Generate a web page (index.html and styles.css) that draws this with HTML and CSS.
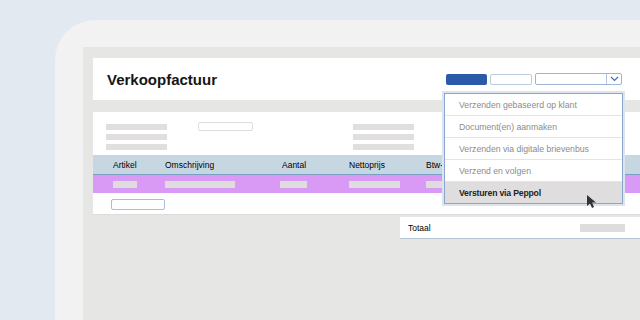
FILE: index.html
```html
<!DOCTYPE html>
<html>
	<head>
		<title>Verkoopfactuur</title>
		<link rel="stylesheet" href="styles.css">
	</head>
	<body>
		<div class="device">
			<div class="screen">
				<div class="topbar">
					<h1 class="title">Verkoopfactuur</h1>
					<div class="actions">
						<span class="btn btn-primary"></span>
						<span class="btn btn-plain"></span>
						<span class="select">
							<span class="select-arrow">
								<svg width="9" height="6" viewBox="0 0 9 6"><path d="M1 1 L4.5 4.5 L8 1" fill="none" stroke="#3f6fb5" stroke-width="1.2"/></svg>
							</span>
						</span>
						<ul class="menu">
							<li>Verzenden gebaseerd op klant</li>
							<li>Document(en) aanmaken</li>
							<li>Verzenden via digitale brievenbus</li>
							<li>Verzend en volgen</li>
							<li class="active">Versturen via Peppol</li>
							<svg class="cursor" width="11" height="14" viewBox="0 0 11 14"><path d="M0 0 L0 11 L3 8.5 L5 13 L7 12 L5 7.5 L9 7.5 Z" fill="#333"/></svg>
						</ul>
					</div>
				</div>
				<div class="panel">
					<div class="fields">
						<div class="lines"><i></i><i></i><i></i></div>
						<span class="field"></span>
						<div class="lines lines-right"><i></i><i></i><i></i></div>
					</div>
					<div class="row row-head">
						<span>Artikel</span>
						<span>Omschrijving</span>
						<span>Aantal</span>
						<span>Nettoprijs</span>
						<span>Btw-tarief</span>
					</div>
					<div class="row row-item">
						<span><i class="ph" style="width: 24px"></i></span>
						<span><i class="ph" style="width: 70px"></i></span>
						<span><i class="ph ph-shift" style="width: 27px"></i></span>
						<span><i class="ph" style="width: 51px"></i></span>
						<span><i class="ph" style="width: 40px"></i></span>
					</div>
					<div class="row-add"><span class="field field-blue"></span></div>
				</div>
				<div class="totals">
					<span>Totaal</span>
					<i class="ph ph-total"></i>
				</div>
			</div>
		</div>
	</body>
</html>
```

FILE: styles.css
```css
html, body {
	margin: 0px;
	height: 320px;
	overflow: hidden;
}
body {
	background-color: #e2e9f0;
	font-family: "Liberation Sans", Arial, sans-serif;
	color: #111;
}
.device {
	margin: 20px 0px 0px 55px;
	padding: 27px 0px 0px 28px;
	height: 300px;
	box-sizing: border-box;
	background-color: #f2f2f2;
	border-top-left-radius: 40px;
}
.screen {
	padding: 11px 0px 0px 10px;
	height: 273px;
	box-sizing: border-box;
	background-color: #e6e6e4;
}
.topbar {
	height: 42px;
	background-color: white;
	display: flex;
	align-items: center;
	justify-content: space-between;
	padding: 0px 18px 0px 14px;
}
.title {
	margin: 0px;
	font-size: 15px;
	font-weight: bold;
	color: #151515;
}
.actions {
	position: relative;
	display: flex;
	align-items: center;
	gap: 3px;
}
.btn {
	display: block;
	height: 11px;
	border-radius: 2px;
	box-sizing: border-box;
}
.btn-primary {
	width: 41px;
	background-color: #2b5ba8;
}
.btn-plain {
	width: 42px;
	border: 1px solid #bccbe0;
	background-color: white;
}
.select {
	display: flex;
	justify-content: flex-end;
	width: 87px;
	height: 12px;
	box-sizing: border-box;
	border: 1px solid #9fb4d3;
	border-radius: 2px;
}
.select-arrow {
	width: 14px;
	border-left: 1px solid #b3c4dc;
	display: flex;
	align-items: center;
	justify-content: center;
}
.menu {
	position: absolute;
	left: -2px;
	top: 20px;
	width: 179px;
	box-sizing: border-box;
	margin: 0px;
	padding: 0px;
	list-style: none;
	background-color: white;
	border: 1px solid #8aa6cd;
	box-shadow: 0px 0px 0px 2px #dbe4ef;
	z-index: 2;
}
.menu li {
	height: 21px;
	line-height: 22px;
	padding-left: 14px;
	font-size: 8.7px;
	color: #8c8c8c;
	border-bottom: 1px solid #e4e4e4;
}
.menu li.active {
	border-bottom: none;
	background-color: #dfdddd;
	color: #1e1e1e;
	font-weight: bold;
	letter-spacing: -0.2px;
}
.cursor {
	position: absolute;
	left: 142px;
	top: 101px;
}
.panel {
	margin-top: 12px;
	height: 103px;
	background-color: white;
	border-bottom: 1px solid #dcdcdc;
	box-sizing: border-box;
}
.fields {
	display: flex;
	align-items: flex-start;
	height: 43px;
	box-sizing: border-box;
	padding: 12px 0px 0px 13px;
}
.lines {
	display: flex;
	flex-direction: column;
	gap: 4px;
	width: 61px;
}
.lines i {
	height: 6px;
	background-color: #e0dede;
}
.lines-right {
	margin-left: 100px;
}
.field {
	display: block;
	margin: -2px 0px 0px 31px;
	width: 55px;
	height: 9px;
	box-sizing: border-box;
	border: 1px solid #dedede;
	border-radius: 2px;
}
.row {
	display: grid;
	grid-template-columns: 52px 117px 67px 77px 1fr;
	align-items: center;
	padding-left: 20px;
}
.row-head {
	height: 20px;
	box-sizing: border-box;
	background-color: #c7d7e2;
	border-bottom: 1px solid #7c9ec4;
	font-size: 8.5px;
	color: #000;
}
.row-item {
	height: 18px;
	background-color: #d89af5;
}
.row-item span {
	display: flex;
}
.ph {
	display: block;
	height: 7px;
	background-color: #dedcdc;
}
.ph-shift {
	margin-left: -2px;
}
.row-add {
	padding: 6px 0px 0px 18px;
}
.field-blue {
	margin: 0px;
	width: 54px;
	height: 11px;
	border-color: #a9bcd9;
}
.totals {
	margin: 2px 0px 0px 307px;
	height: 22px;
	box-sizing: border-box;
	background-color: white;
	border-bottom: 1px solid #b5c4d4;
	display: flex;
	align-items: center;
	justify-content: space-between;
	padding: 0px 15px 0px 8px;
	font-size: 8.5px;
	color: #000;
}
.ph-total {
	width: 45px;
	height: 8px;
}
```
